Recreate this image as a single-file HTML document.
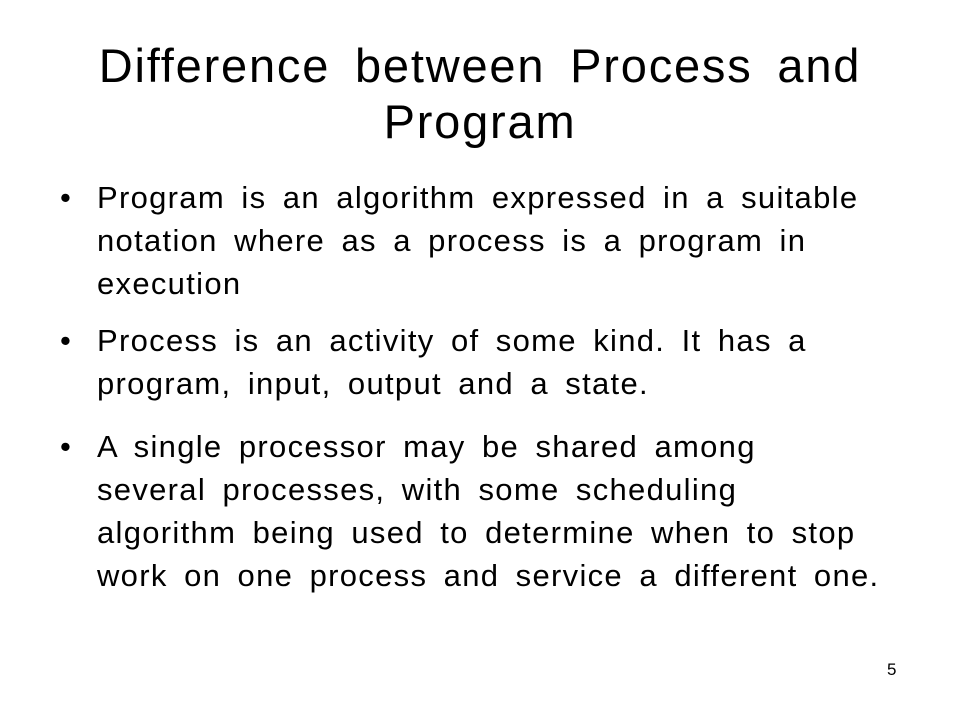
<!DOCTYPE html>
<html><head><style>
body{margin:0;width:960px;height:720px;background:#fff;font-family:"Liberation Sans",Arial,sans-serif;color:#000;position:relative;overflow:hidden;font-variant-ligatures:none}
h1{position:absolute;left:0;top:38px;width:960px;margin:0;text-align:center;font-weight:normal;font-size:47px;line-height:56px;letter-spacing:1.8px;word-spacing:10px}
.b{position:absolute;left:97px;font-size:31px;line-height:43px;letter-spacing:1.3px;word-spacing:6.5px;white-space:nowrap}
.b span{position:absolute;left:-37px;top:0}
.n{position:absolute;left:887px;top:660px;font-size:17px}
</style></head><body>
<h1>Difference between Process and<br>Program</h1>
<div class="b" style="top:176px"><span>•</span>
<div>Program is an algorithm expressed in a suitable</div>
<div>notation where as a process is a program in</div>
<div>execution</div></div>
<div class="b" style="top:319px"><span>•</span>
<div>Process is an activity of some kind. It has a</div>
<div>program, input, output and a state.</div></div>
<div class="b" style="top:425px"><span>•</span>
<div>A single processor may be shared among</div>
<div>several processes, with some scheduling</div>
<div>algorithm being used to determine when to stop</div>
<div>work on one process and service a different one.</div></div>
<div class="n">5</div>
</body></html>
